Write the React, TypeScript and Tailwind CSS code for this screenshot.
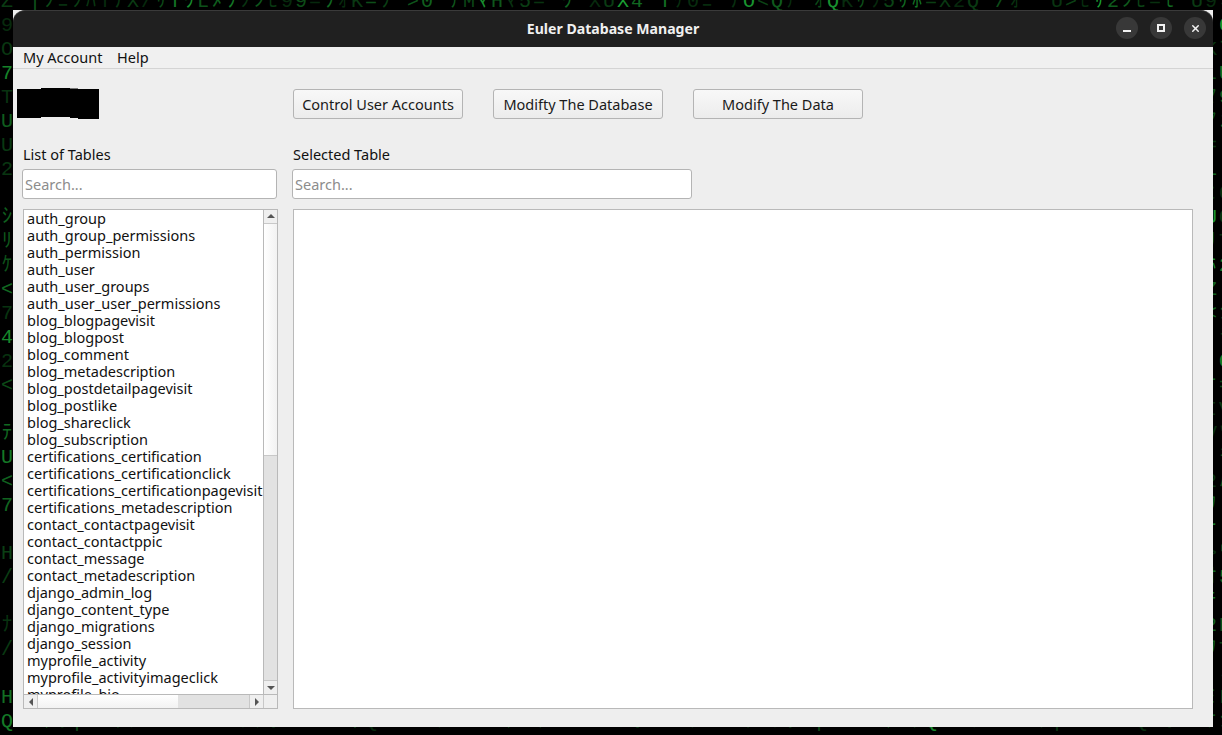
import React from 'react';
import { X } from 'lucide-react';

const TABLES = [
  'auth_group',
  'auth_group_permissions',
  'auth_permission',
  'auth_user',
  'auth_user_groups',
  'auth_user_user_permissions',
  'blog_blogpagevisit',
  'blog_blogpost',
  'blog_comment',
  'blog_metadescription',
  'blog_postdetailpagevisit',
  'blog_postlike',
  'blog_shareclick',
  'blog_subscription',
  'certifications_certification',
  'certifications_certificationclick',
  'certifications_certificationpagevisit',
  'certifications_metadescription',
  'contact_contactpagevisit',
  'contact_contactppic',
  'contact_message',
  'contact_metadescription',
  'django_admin_log',
  'django_content_type',
  'django_migrations',
  'django_session',
  'myprofile_activity',
  'myprofile_activityimageclick',
  'myprofile_bio',
];

const GLYPHS = 'ZXKNMVHUTLIOQ0124579=+/<>|ﾊﾐﾋｳｼﾅﾓﾆｻﾜﾂｵﾘｱﾎﾃﾏｹﾒ';
const COLS = 88;
const ROWS = 31;

// small seeded generator so the wallpaper is the same on every load
function makeRain() {
  let seed = 1234;
  const next = () => {
    seed = (seed * 16807) % 2147483647;
    return seed / 2147483647;
  };
  const columns: { glyph: string | null; opacity: number }[][] = [];
  for (let c = 0; c < COLS; c++) {
    const col: { glyph: string | null; opacity: number }[] = [];
    for (let r = 0; r < ROWS; r++) {
      const glyph = GLYPHS[Math.floor(next() * GLYPHS.length)];
      const opacity = 0.2 + next() * next() * 0.7;
      // only the strips around the window are ever seen
      const visible = c === 0 || c >= COLS - 2 || r === 0 || r === ROWS - 1;
      col.push({ glyph: visible && next() > 0.12 ? glyph : null, opacity });
    }
    columns.push(col);
  }
  return columns;
}

const RAIN = makeRain();

function MatrixRain() {
  return (
    <div aria-hidden className="absolute left-0 top-[-10px] flex font-['Liberation_Mono','Noto_Sans_CJK_JP',monospace] text-[20px] leading-[24px] text-[#22c840]">
      {RAIN.map((col, i) => (
        <div key={i} className="w-[14px] shrink-0 text-center">
          {col.map((cell, j) => (
            <div key={j} className="h-[24px] w-[14px] overflow-hidden" style={{ opacity: cell.opacity }}>
              {cell.glyph}
            </div>
          ))}
        </div>
      ))}
    </div>
  );
}

function WindowButton({ children }: { children: React.ReactNode }) {
  return (
    <button className="w-[22px] h-[22px] rounded-full bg-[#383838] flex items-center justify-center text-[#f2f2f2]">
      {children}
    </button>
  );
}

function TitleBar() {
  return (
    <div className="relative h-[37px] bg-[#202020] rounded-t-[12px] border-t border-[#3a3a3a] flex items-center justify-center shrink-0">
      <span className="text-[14.1px] font-bold text-[#f0f0f0] -mt-px">Euler Database Manager</span>
      <div className="absolute right-[7px] top-[6px] flex gap-[12px]">
        <WindowButton>
          <span className="block w-2 h-[2px] bg-[#f2f2f2] mt-[5px]" />
        </WindowButton>
        <WindowButton>
          <span className="block w-2 h-2 border-2 border-[#f2f2f2]" />
        </WindowButton>
        <WindowButton>
          <X size={11} strokeWidth={3.2} />
        </WindowButton>
      </div>
    </div>
  );
}

function PushButton({ label }: { label: string }) {
  return (
    <button className="w-[170px] h-[30px] pt-px rounded-[3px] border border-[#b4b4b4] bg-gradient-to-b from-[#f8f8f8] to-[#ececec] text-[14.5px] text-[#1a1a1a]">
      {label}
    </button>
  );
}

function SearchBox({ width }: { width: string }) {
  return (
    <input
      placeholder="Search..."
      className={`${width} h-[30px] rounded-[3px] border border-[#b4b4b4] bg-white px-[2px] text-[14.5px] placeholder:text-[#8c8c8c] outline-none`}
    />
  );
}

function ArrowBox({ dir, className }: { dir: 'up' | 'down' | 'left' | 'right'; className: string }) {
  const points = {
    up: '1,6 9,6 5,2',
    down: '1,3 9,3 5,7',
    left: '7,1 7,9 3,5',
    right: '3,1 3,9 7,5',
  }[dir];
  return (
    <div className={`flex items-center justify-center bg-[#efefef] shrink-0 ${className}`}>
      <svg width="10" height="10" viewBox="0 0 10 10">
        <polygon points={points} fill="#555555" />
      </svg>
    </div>
  );
}

function TableList() {
  return (
    <div className="w-[255px] h-[500px] mt-[10px] ml-px border border-[#b9b9b9] bg-white flex flex-col">
      <div className="flex flex-1 min-h-0">
        <div className="flex-1 min-w-0 overflow-hidden pl-[3px]">
          {TABLES.map((t) => (
            <div key={t} className="h-[17px] leading-[17px] text-[14.5px] text-[#111111] whitespace-nowrap">
              {t}
            </div>
          ))}
        </div>
        <div className="w-[14px] shrink-0 border-l border-[#b9b9b9] flex flex-col">
          <ArrowBox dir="up" className="h-[14px] border-b border-[#c8c8c8]" />
          <div className="h-[232px] bg-gradient-to-r from-white to-[#f2f2f2] border-b border-[#c8c8c8]" />
          <div className="flex-1 bg-[#e2e2e2]" />
          <ArrowBox dir="down" className="h-[14px] border-t border-[#c8c8c8]" />
        </div>
      </div>
      <div className="h-[14px] shrink-0 border-t border-[#b9b9b9] flex">
        <ArrowBox dir="left" className="w-[14px] border-r border-[#c8c8c8]" />
        <div className="w-[140px] bg-gradient-to-b from-white to-[#f2f2f2]" />
        <div className="flex-1 bg-[#e2e2e2]" />
        <ArrowBox dir="right" className="w-[14px] border-l border-[#c8c8c8]" />
        <div className="w-[14px] bg-[#efefef] border-l border-[#c8c8c8]" />
      </div>
    </div>
  );
}

export default function App() {
  return (
    <div className="relative w-[1222px] h-[735px] overflow-hidden bg-black pl-[13px] pt-[10px] font-['Noto_Sans',sans-serif]">
      <MatrixRain />
      <div className="relative w-[1200px] h-[717px] flex flex-col bg-[#eeeeee] text-[#111111]">
        <TitleBar />

        <div className="h-[22px] shrink-0 border-b border-[#d4d4d4] bg-[#f0f0f0] flex items-center pl-[10px] gap-[14.6px] text-[14.5px]">
          <span>My Account</span>
          <span>Help</span>
        </div>

        <div className="flex pt-[20px] pl-[4px]">
          {/* blacked out logo */}
          <svg width="82" height="31" viewBox="0 0 82 31" className="shrink-0 -mt-px">
            <polygon points="0,1 24,1 24,0 53,0 53,0.5 61,0.5 61,1 82,1 82,31 61,31 61,30 53,30 53,29 24,29 24,30 0,30" fill="#000000" />
          </svg>
          <div className="flex gap-[30px] ml-[194px]">
            <PushButton label="Control User Accounts" />
            <PushButton label="Modifty The Database" />
            <PushButton label="Modify The Data" />
          </div>
        </div>

        <div className="flex mt-[25px] pl-[9px] gap-[14px]">
          <div className="flex flex-col w-[256px]">
            <span className="h-[22px] leading-[20px] ml-px text-[14.5px] mb-[3px]">List of Tables</span>
            <SearchBox width="w-[255px]" />
            <TableList />
          </div>
          <div className="flex flex-col flex-1">
            <span className="h-[22px] leading-[20px] ml-px text-[14.5px] mb-[3px]">Selected Table</span>
            <SearchBox width="w-[400px]" />
            <div className="w-[900px] h-[500px] mt-[10px] ml-px border border-[#b9b9b9] bg-white" />
          </div>
        </div>
      </div>
    </div>
  );
}
